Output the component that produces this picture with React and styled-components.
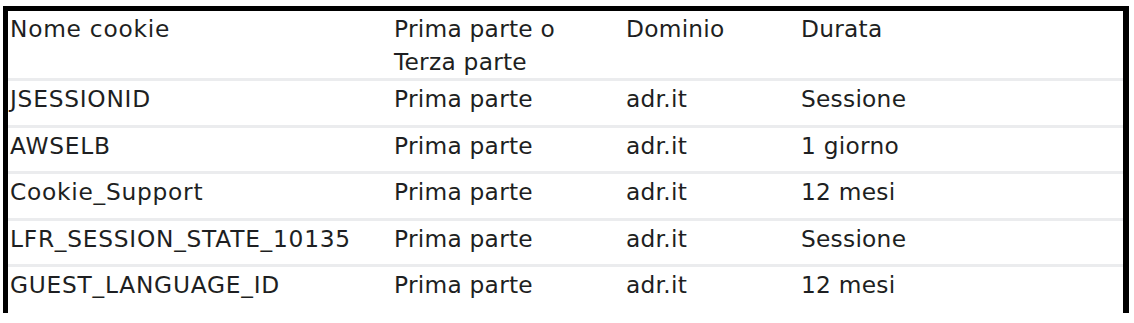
import React from "react";
import styled, { createGlobalStyle } from "styled-components";

const Global = createGlobalStyle`
  html, body { margin: 0; padding: 0; background: #ffffff; }
  body { font-family: "DejaVu Sans", Inter, sans-serif; }
`;

const Frame = styled.div`
  margin: 6px 0 0 3px;
  width: 1126px;
  box-sizing: border-box;
  border-top: 5px solid #000;
  border-left: 5px solid #000;
  border-right: 6px solid #000;
  padding-bottom: 2px;
  background: #fff;
`;

const Row = styled.div`
  display: grid;
  grid-template-columns: 384px 232px 175px 1fr;
  min-height: 43.5px;
  border-bottom: ${(p) => (p.$last ? "none" : "3px solid #ebecee")};
`;

const Cell = styled.div`
  padding: 1px 0 0 2px;
  font-size: 23.3px;
  line-height: 33px;
  color: #1e1f22;
  letter-spacing: ${(p) => (p.$name ? "0.75px" : "0.25px")};
  white-space: nowrap;
`;

const rows = [
  ["JSESSIONID", "Prima parte", "adr.it", "Sessione"],
  ["AWSELB", "Prima parte", "adr.it", "1 giorno"],
  ["Cookie_Support", "Prima parte", "adr.it", "12 mesi"],
  ["LFR_SESSION_STATE_10135", "Prima parte", "adr.it", "Sessione"],
  ["GUEST_LANGUAGE_ID", "Prima parte", "adr.it", "12 mesi"],
];

export default function App() {
  return (
    <>
      <Global />
      <Frame>
        <Row>
          <Cell $name>Nome cookie</Cell>
          <Cell>
            Prima parte o
            <br />
            Terza parte
          </Cell>
          <Cell>Dominio</Cell>
          <Cell>Durata</Cell>
        </Row>
        {rows.map((r, i) => (
          <Row key={r[0]} $last={i === rows.length - 1}>
            {r.map((c, j) => (
              <Cell key={j} $name={j === 0}>
                {c}
              </Cell>
            ))}
          </Row>
        ))}
      </Frame>
    </>
  );
}
